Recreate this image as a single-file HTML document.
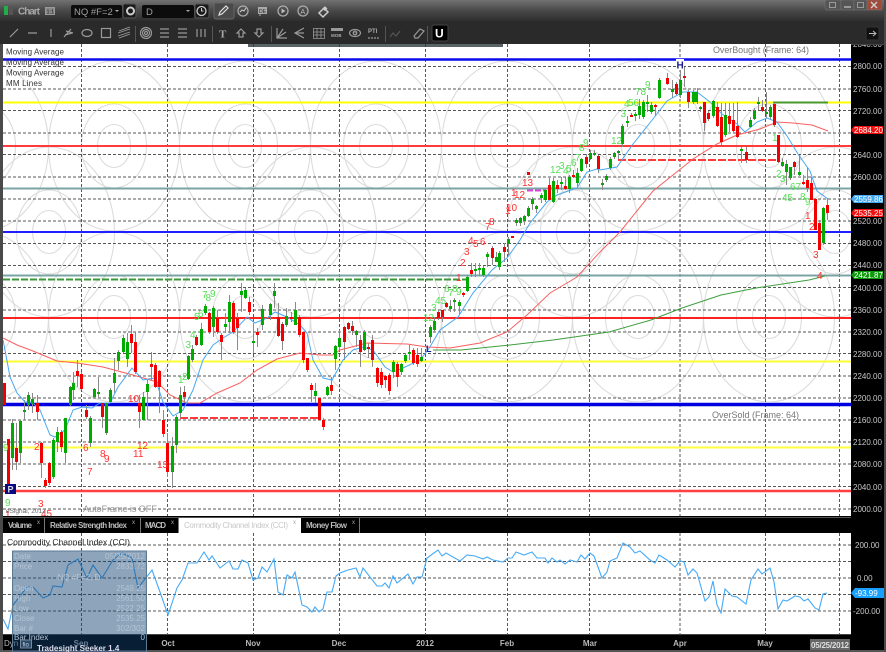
<!DOCTYPE html>
<html><head><meta charset="utf-8"><style>
html,body{margin:0;padding:0;background:#333;width:886px;height:652px;overflow:hidden}
svg{display:block;filter:blur(.3px)}
text{font-family:"Liberation Sans",sans-serif}
</style></head><body>
<svg width="886" height="652" viewBox="0 0 886 652" xmlns="http://www.w3.org/2000/svg">
<defs>
<linearGradient id="tb" x1="0" y1="0" x2="0" y2="1"><stop offset="0" stop-color="#727272"/><stop offset=".45" stop-color="#4c4c4c"/><stop offset="1" stop-color="#2e2e2e"/></linearGradient>
<clipPath id="cc"><rect x="3" y="47" width="848" height="355"/></clipPath>
<clipPath id="cp"><rect x="3" y="44" width="848" height="472"/></clipPath>
<clipPath id="ax"><rect x="851" y="45" width="33" height="600"/></clipPath>
</defs>
<rect width="886" height="652" fill="#4a4a4a"/>
<rect width="886" height="21" fill="url(#tb)"/>
<rect y="21" width="886" height="23" fill="#2a2a2a"/>
<!-- title row -->
<rect x="4" y="6" width="4" height="9" fill="#1fae4a"/><rect x="9" y="6" width="4" height="9" fill="#555"/>
<text x="18" y="14.500" font-size="10" font-weight="bold" fill="#a8a8a8" textLength="22">Chart</text>
<rect x="45.500" y="7.500" width="9" height="7" fill="#888" stroke="#999"/><text x="46.500" y="13.500" font-size="5.500" fill="#222">1:1</text>
<rect x="71" y="5" width="51" height="13" rx="2" fill="#0c0c0c"/>
<text x="74" y="15" font-size="9.500" fill="#a0a0a0">NQ #F=2</text>
<path d="M115 10h4l-2 2z" fill="#aaa"/>
<rect x="123" y="4" width="13" height="14" rx="2" fill="#1a1a1a" stroke="#555"/>
<circle cx="130.500" cy="11" r="3.500" fill="none" stroke="#ccc" stroke-width="2"/>
<rect x="142" y="5" width="52" height="13" rx="2" fill="#0c0c0c"/>
<text x="146" y="15" font-size="9.500" fill="#a0a0a0">D</text>
<path d="M186 10h4l-2 2z" fill="#aaa"/>
<rect x="195" y="4" width="14" height="14" rx="2" fill="#1a1a1a" stroke="#555"/>
<circle cx="201.500" cy="11" r="4.500" fill="none" stroke="#ccc" stroke-width="1.300"/><path d="M201.500 8v3h2" fill="none" stroke="#ccc"/>
<rect x="214" y="3" width="20" height="16" rx="2" fill="#4a4a4a" stroke="#666"/>
<path d="M219 15l1-3 6-6 2 2-6 6z" fill="none" stroke="#ddd" stroke-width="1.200"/>
<circle cx="243" cy="11" r="5" fill="none" stroke="#aaa" stroke-width="1.300"/><path d="M240 12l2-2 2 1 2-3" fill="none" stroke="#ccc"/>
<rect x="258" y="7" width="9" height="7" fill="#aaa"/><path d="M260 14v2" stroke="#aaa"/><text x="259" y="13" font-size="5" fill="#222">DE</text>
<circle cx="283" cy="11" r="5" fill="none" stroke="#aaa" stroke-width="1.300"/><path d="M281.500 8.500l4 2.500-4 2.500z" fill="#bbb"/>
<circle cx="303" cy="11" r="5" fill="none" stroke="#aaa" stroke-width="1.300"/><text x="300.500" y="14" font-size="7" fill="#bbb">A</text>
<path d="M319 13l5-5 4 4-5 5z" fill="none" stroke="#ccc" stroke-width="1.500"/><rect x="323" y="7" width="3.500" height="3.500" fill="#ccc" transform="rotate(45 325 9)"/>
<!-- window buttons -->
<rect x="825" y="0" width="16" height="10" rx="2" fill="#555" stroke="#777" stroke-width=".5"/><rect x="829.500" y="2.500" width="6" height="5" fill="none" stroke="#999"/>
<rect x="841" y="0" width="13" height="10" fill="#555" stroke="#777" stroke-width=".5"/><rect x="844" y="6" width="7" height="2" fill="#999"/>
<rect x="854" y="0" width="13" height="10" fill="#555" stroke="#777" stroke-width=".5"/><rect x="857.500" y="2.500" width="6" height="5" fill="none" stroke="#999"/>
<rect x="867" y="0" width="15" height="10" rx="1" fill="#a24a3a" stroke="#777" stroke-width=".5"/><path d="M871 2l6 6M877 2l-6 6" stroke="#ccc" stroke-width="1.500"/>
<!-- toolbar -->
<g fill="none" stroke="#999" stroke-width="1.200">
<path d="M10 37l8-8M28 33h9M51 29v8"/>
<path d="M64 37l7-8M66 31l7 2M65 35l7-2"/>
<ellipse cx="87" cy="33" rx="5" ry="3.500"/>
<rect x="101.500" y="28.500" width="9" height="9"/>
<path d="M118 36l12-4M118 33l12-4M119 38l11-4M119 31l11-4" stroke-width=".9"/>
<circle cx="146" cy="33" r="5.500"/><circle cx="146" cy="33" r="3.500"/><circle cx="146" cy="33" r="1.500"/>
<path d="M160 29h9M160 33h9M160 37h9M178 29h9M178 33h9M178 37h9"/>
<path d="M197 29v8M201 29v8M205 29v8"/>
<path d="M241 29l4 4h-2v4h-4v-4h-2zM259 37l4-4h-2v-4h-4v4h-2z"/>
<path d="M277 28v10h10M277 38l9-6M277 38l6-9"/>
<path d="M304 28l-9 5 9 5M295 33h9"/>
<path d="M313.500 28.500h11v10h-11zM317 28v10M321 28v10M313 32h11M313 35h11" stroke-width=".8"/>
<rect x="331" y="28" width="12" height="3" fill="#999" stroke="none"/>
<ellipse cx="355" cy="33" rx="5.500" ry="3.500"/>
<circle cx="355" cy="33" r="1.800"/>
<path d="M368 38h11" stroke-dasharray="2 1"/>
<path d="M390 37l3-4 3 3 4-5" stroke="#555"/>
<path d="M414 36l6-7 4 2-6 7h-3z"/>
</g>
<g stroke="#555"><path d="M135.500 26v16M212.500 26v16M271.500 26v16M385.500 26v16M427.500 26v16"/></g>
<text x="219" y="37.500" font-size="11" font-weight="bold" fill="#aaa" style="font-family:'Liberation Serif',serif">T</text>
<text x="331" y="37" font-size="4.500" font-weight="bold" fill="#aaa">MOB</text>
<text x="353" y="35" font-size="4.500" fill="#aaa">O</text>
<text x="368" y="33" font-size="6" font-weight="bold" fill="#aaa">PTI</text>
<rect x="432" y="25" width="16" height="16" rx="2" fill="#000" stroke="#444"/>
<text x="435" y="37.500" font-size="12" font-weight="bold" fill="#fff">U</text>
<rect x="866" y="27" width="13" height="13" rx="1" fill="#111" stroke="#333"/>
<path d="M869 33.500h6M873 31l3 2.500-3 2.500" fill="none" stroke="#bbb"/>
<!-- chart -->
<rect x="3" y="44" width="848" height="472" fill="#fff"/>
<rect x="0" y="44" width="3" height="473" fill="#4a4a4a"/>
<rect x="248" y="44" width="255" height="3" fill="#5a6466"/>
<rect x="851" y="44" width="33" height="608" fill="#000"/>
<g clip-path="url(#cc)" fill="none" stroke="#dcdcdc" stroke-width="1.100">
<ellipse cx="-17" cy="146" rx="16.500" ry="21.500"/><ellipse cx="-17" cy="146" rx="32.500" ry="42"/><ellipse cx="-17" cy="146" rx="65.500" ry="85"/>
<ellipse cx="114" cy="146" rx="16.500" ry="21.500"/><ellipse cx="114" cy="146" rx="32.500" ry="42"/><ellipse cx="114" cy="146" rx="65.500" ry="85"/>
<ellipse cx="245" cy="146" rx="16.500" ry="21.500"/><ellipse cx="245" cy="146" rx="32.500" ry="42"/><ellipse cx="245" cy="146" rx="65.500" ry="85"/>
<ellipse cx="376" cy="146" rx="16.500" ry="21.500"/><ellipse cx="376" cy="146" rx="32.500" ry="42"/><ellipse cx="376" cy="146" rx="65.500" ry="85"/>
<ellipse cx="507" cy="146" rx="16.500" ry="21.500"/><ellipse cx="507" cy="146" rx="32.500" ry="42"/><ellipse cx="507" cy="146" rx="65.500" ry="85"/>
<ellipse cx="638" cy="146" rx="16.500" ry="21.500"/><ellipse cx="638" cy="146" rx="32.500" ry="42"/><ellipse cx="638" cy="146" rx="65.500" ry="85"/>
<ellipse cx="769" cy="146" rx="16.500" ry="21.500"/><ellipse cx="769" cy="146" rx="32.500" ry="42"/><ellipse cx="769" cy="146" rx="65.500" ry="85"/>
<ellipse cx="49" cy="232" rx="16.500" ry="21.500"/><ellipse cx="49" cy="232" rx="32.500" ry="42"/><ellipse cx="49" cy="232" rx="65.500" ry="85"/>
<ellipse cx="311" cy="232" rx="16.500" ry="21.500"/><ellipse cx="311" cy="232" rx="32.500" ry="42"/><ellipse cx="311" cy="232" rx="65.500" ry="85"/>
<ellipse cx="573" cy="232" rx="16.500" ry="21.500"/><ellipse cx="573" cy="232" rx="32.500" ry="42"/><ellipse cx="573" cy="232" rx="65.500" ry="85"/>
<ellipse cx="835" cy="232" rx="16.500" ry="21.500"/><ellipse cx="835" cy="232" rx="32.500" ry="42"/><ellipse cx="835" cy="232" rx="65.500" ry="85"/>
<ellipse cx="-17" cy="317" rx="16.500" ry="21.500"/><ellipse cx="-17" cy="317" rx="32.500" ry="42"/><ellipse cx="-17" cy="317" rx="65.500" ry="85"/>
<ellipse cx="114" cy="317" rx="16.500" ry="21.500"/><ellipse cx="114" cy="317" rx="32.500" ry="42"/><ellipse cx="114" cy="317" rx="65.500" ry="85"/>
<ellipse cx="245" cy="317" rx="16.500" ry="21.500"/><ellipse cx="245" cy="317" rx="32.500" ry="42"/><ellipse cx="245" cy="317" rx="65.500" ry="85"/>
<ellipse cx="376" cy="317" rx="16.500" ry="21.500"/><ellipse cx="376" cy="317" rx="32.500" ry="42"/><ellipse cx="376" cy="317" rx="65.500" ry="85"/>
<ellipse cx="507" cy="317" rx="16.500" ry="21.500"/><ellipse cx="507" cy="317" rx="32.500" ry="42"/><ellipse cx="507" cy="317" rx="65.500" ry="85"/>
<ellipse cx="638" cy="317" rx="16.500" ry="21.500"/><ellipse cx="638" cy="317" rx="32.500" ry="42"/><ellipse cx="638" cy="317" rx="65.500" ry="85"/>
<ellipse cx="769" cy="317" rx="16.500" ry="21.500"/><ellipse cx="769" cy="317" rx="32.500" ry="42"/><ellipse cx="769" cy="317" rx="65.500" ry="85"/>
</g>
<!-- grid -->
<g fill="none" stroke="#3a3a3a" stroke-width="1" stroke-dasharray="3 2" opacity=".85">
<path d="M3 66.500H851M3 89H851M3 110.500H851M3 133H851M3 154.500H851M3 177H851M3 199H851M3 221H851M3 243.500H851M3 265.500H851M3 287.500H851M3 310H851M3 332H851M3 353.500H851M3 376H851M3 398H851M3 420H851M3 442H851M3 464H851M3 486.500H851M3 509H851"/>
<path d="M81.500 44V516M167.500 44V516M253.500 44V516M339.500 44V516M425.500 44V516M507.500 44V516M589.500 44V516M680 44V516M765.500 44V516M839.500 44V516"/>
</g>
<!-- horizontal levels -->
<g fill="none">
<path d="M3 59.500H851" stroke="#0a0aee" stroke-width="2.600"/>
<path d="M3 102.500H851" stroke="#ffff00" stroke-width="2"/>
<path d="M3 146H851" stroke="#ff3a3a" stroke-width="2"/>
<path d="M3 188.500H851" stroke="#7aa3a3" stroke-width="2"/>
<path d="M3 232H851" stroke="#2020ff" stroke-width="2"/>
<path d="M3 275.500H851" stroke="#7aa3a3" stroke-width="2"/>
<path d="M3 279.500H467" stroke="#3a9a3a" stroke-width="2" stroke-dasharray="7 2"/>
<path d="M3 318H851" stroke="#ff2020" stroke-width="2"/>
<path d="M3 361.500H851" stroke="#ffff30" stroke-width="2"/>
<path d="M3 404.500H851" stroke="#0000e0" stroke-width="3.400"/>
<path d="M3 447.500H851" stroke="#ffff40" stroke-width="2"/>
<path d="M3 491H851" stroke="#ff4040" stroke-width="2.400"/>
<path d="M180 418H318" stroke="#ff3a3a" stroke-width="2" stroke-dasharray="8 2"/>
<path d="M618 160H778" stroke="#ff3a3a" stroke-width="2" stroke-dasharray="8 2"/>
<path d="M527 190.500H545" stroke="#e040e0" stroke-width="2" stroke-dasharray="6 2"/>
<path d="M773 102.500H828" stroke="#4a9a2a" stroke-width="2"/>
</g>
<!-- wicks -->
<path fill="none" stroke="#8a8a8a" stroke-width="1" d="M8.500 439V490M12.500 419V470M16.500 423V470M20.500 420V463M24.500 400V420M28.500 392V410M32.500 393V413M37.500 395V420M41.500 442V478M45.500 478V488M49.500 462V485M53.500 438V479M57.500 427V452M61.500 430V452M65.500 418V463M70.500 386V406M73.500 372V400M77.500 360V387M81.500 372V390M86.500 405V419M90.500 416V447M94.500 388V398M98.500 377V398M102.500 403V428M106.500 403V435M110.500 388V403M114.500 358V393M118.500 350V370M123.500 335V353M127.500 333V367M131.500 325V353M135.500 332V374M139.500 395V428M143.500 392V420M147.500 380V420M151.500 352V380M155.500 363V388M159.500 370V413M163.500 410V437M167.500 433V477M172.500 437V488M176.500 415V453M180.500 387V418M184.500 386V403M188.500 355V380M192.500 345V362M196.500 335V346M201.500 323V346M205.500 304V315M209.500 312V334M213.500 306V337M217.500 310V334M221.500 333V360M225.500 313V333M229.500 295V333M233.500 301V334M237.500 313V350M241.500 283V312M245.500 288V299M249.500 297V315M253.500 323V353M257.500 328V347M262.500 305V330M270.500 303V320M274.500 283V308M278.500 303V337M282.500 322V350M286.500 308V327M291.500 312V322M295.500 302V325M299.500 315V337M303.500 332V363M307.500 358V372M311.500 383V402M315.500 383V403M319.500 398V420M323.500 418V430M327.500 386V396M331.500 377V395M335.500 345V370M339.500 330V350M344.500 326V360M348.500 322V330M352.500 321V335M356.500 330V347M360.500 335V367M364.500 330V351M368.500 343V358M372.500 335V367M377.500 367V387M381.500 368V388M385.500 375V388M389.500 373V395M393.500 360V378M397.500 362V387M401.500 363V375M405.500 353V363M409.500 345V360M413.500 348V365M417.500 348V367M421.500 348V362M430.500 325V343M434.500 317V332M438.500 310V320M442.500 310V322M446.500 302V308M450.500 300V312M454.500 298V312M459.500 300V315M463.500 292V297M467.500 275V292M471.500 263V277M475.500 263V277M479.500 263V275M483.500 266V277M487.500 252V267M492.500 246V265M496.500 252V262M499.500 251V270M504.500 243V262M508.500 237V255M516.500 218V226M520.500 217V226M524.500 215V225M528.500 206V217M532.500 197V210M536.500 205V213M541.500 193V203M545.500 188V202M549.500 178V200M553.500 178V203M557.500 180V193M561.500 177V190M565.500 177V190M569.500 175V193M573.500 170V178M577.500 168V187M581.500 158V172M586.500 154V168M590.500 150V160M594.500 150V156M598.500 155V173M602.500 179V190M606.500 174V182M610.500 157V170M614.500 152V159M618.500 150V159M622.500 124V147M627.500 116V127M631.500 113V117M635.500 112V121M639.500 99V119M643.500 100V119M647.500 95V112M651.500 102V114M655.500 104V116M659.500 78V99M667.500 73V85M672.500 80V98M676.500 82V95M680.500 70V98M684.500 67V87M688.500 90V108M693.500 90V104M697.500 88V104M700.500 106V112M704.500 102V131M708.500 111V121M713.500 100V118M717.500 102V127M721.500 103V145M725.500 103V137M729.500 103V132M733.500 103V132M737.500 102V138M741.500 147V163M746.500 147V163M750.500 117V128M754.500 108V120M758.500 97V110M762.500 100V112M766.500 92V118M770.500 105V120M774.500 103V127M778.500 135V163M782.500 158V167M786.500 160V185M790.500 167V180M794.500 161V175M799.500 155V176M803.500 175V185M807.500 168V192M811.500 177V200M815.500 198V230M819.500 220V250M823.500 207V245M827.500 198V220"/>
<!-- MAs -->
<g clip-path="url(#cp)" fill="none" stroke-width="1">
<polyline stroke="#3f9f3f" points="433,350 461,350 510,345 553,340 609,332 651,320 682,308 721,295 756,288 809,280 825,276"/>
<polyline stroke="#f86060" points="3,338 17,345 33,351 57,361 77,363 103,367 133,375 157,382 170,395 187,403 200,403 217,393 240,383 257,370 277,359 300,353 320,355 333,355 340,350 367,343 407,344 427,347 450,348 480,343 507,332 527,315 550,293 567,283 577,277 600,252 620,232 653,191 693,159 717,144 737,135 760,129 777,122 793,123 812,125 828,131"/>
<polyline stroke="#48a8f0" points="3,340 5,350 10,377 17,393 25,402 32,402 40,410 50,435 55,437 65,430 73,410 82,407 92,408 100,403 110,403 118,387 132,368 143,380 155,378 163,402 173,416 183,410 193,390 203,360 213,345 223,338 233,332 247,317 255,323 267,318 275,312 287,317 300,325 307,333 313,360 323,378 332,380 343,360 353,350 363,347 373,350 385,367 393,372 403,368 420,360 428,350 440,330 458,317 473,293 492,270 507,258 520,240 530,223 547,202 557,195 577,188 587,172 597,169 600,170 617,167 633,144 653,119 667,101 683,92 697,92 710,102 722,114 737,124 745,132 757,122 767,118 777,122 787,136 798,154 810,171 817,191 828,199"/>
</g>
<!-- bodies -->
<path fill="none" stroke="#00aa00" stroke-width="3" d="M12.500 423V458M20.500 421V453M24.500 410V412M28.500 395V405M32.500 399V404M53.500 440V477M57.500 432V442M65.500 418V453M70.500 387V405M73.500 383V390M90.500 418V443M94.500 389V397M98.500 392V394M106.500 403V433M110.500 390V402M114.500 373V383M118.500 352V361M123.500 338V352M127.500 342V359M143.500 397V420M147.500 384V392M172.500 446V472M176.500 417V445M180.500 395V413M188.500 356V379M192.500 349V360M201.500 329V345M205.500 306V313M213.500 308V327M225.500 324V327M229.500 302V322M241.500 291V295M245.500 290V298M253.500 341V343M262.500 309V325M270.500 304V315M274.500 291V296M286.500 316V325M295.500 310V325M315.500 391V396M327.500 387V395M335.500 346V359M339.500 338V347M356.500 331V335M364.500 332V350M393.500 362V372M401.500 364V372M405.500 355V361M409.500 352V354M421.500 357V361M430.500 327V337M434.500 321V330M450.500 306V309M454.500 300V302M459.500 302V306M467.500 277V291M475.500 269V271M479.500 268V270M483.500 268V275M487.500 254V257M496.500 257V262M499.500 253V267M508.500 239V244M516.500 220V223M520.500 218V223M524.500 216V221M528.500 208V216M532.500 199V204M536.500 206V209M541.500 195V198M545.500 190V200M553.500 181V202M561.500 182V184M569.500 177V189M577.500 173V183M581.500 159V171M590.500 153V159M594.500 153V155M602.500 183V185M606.500 176V180M610.500 159V168M614.500 153V157M618.500 151V153M622.500 126V144M627.500 121V123M635.500 114V116M639.500 106V115M643.500 102V117M647.500 102V104M651.500 105V112M659.500 80V98M672.500 89V92M680.500 80V95M693.500 92V102M696.500 92V102M700.500 107V109M713.500 101V116M725.500 115V135M741.500 149V151M750.500 120V127M754.500 111V119M758.500 102V104M766.500 112V114M770.500 107V117M782.500 162V166M786.500 164V172M790.500 167V178M799.500 172V175M823.500 208V243"/>
<path fill="none" stroke="#f00000" stroke-width="3" d="M4.500 383V405M8.500 439V487M16.500 448V462M37.500 403V412M41.500 443V463M45.500 480V486M49.500 463V483M61.500 432V447M77.500 371V376M81.500 374V389M86.500 410V417M102.500 403V417M131.500 334V343M135.500 342V372M139.500 403V412M151.500 364V367M155.500 365V387M159.500 371V387M163.500 420V434M167.500 443V472M184.500 392V397M196.500 337V345M209.500 313V332M217.500 318V332M221.500 335V342M233.500 303V332M237.500 318V328M249.500 302V312M257.500 332V335M278.500 317V336M282.500 324V341M291.500 317V319M299.500 317V335M303.500 332V360M307.500 358V370M311.500 385V390M319.500 398V420M323.500 420V427M331.500 385V391M344.500 327V342M348.500 323V329M352.500 326V331M360.500 340V352M368.500 347V349M372.500 340V360M377.500 368V383M381.500 372V385M385.500 376V380M389.500 375V391M397.500 364V377M413.500 350V363M417.500 355V364M438.500 312V318M442.500 310V317M446.500 303V307M463.500 293V295M471.500 270V274M492.500 248V258M504.500 247V252M512.500 236V238M528.500 172V175M549.500 185V200M557.500 185V189M565.500 186V189M573.500 175V177M586.500 157V164M598.500 156V169M631.500 115V117M655.500 105V107M667.500 78V84M676.500 84V94M684.500 76V78M688.500 92V102M704.500 102V123M708.500 113V119M717.500 107V126M721.500 117V142M729.500 116V124M733.500 120V131M737.500 126V137M746.500 152V160M762.500 107V111M774.500 104V125M778.500 135V162M794.500 162V167M803.500 182V184M807.500 180V188M811.500 183V200M815.500 199V230M819.500 223V250M827.500 205V213"/>
<!-- count numbers -->
<g font-size="10" fill="#55e055">
<text x="3" y="451">9</text><text x="5" y="506">9</text>
<text x="178" y="383">1</text><text x="182" y="380">2</text><text x="185.500" y="348">3</text><text x="190" y="338">4</text><text x="194" y="320">5</text><text x="198" y="317">6</text><text x="202" y="298">7</text><text x="205.500" y="301">8</text><text x="210" y="297">9</text>
<text x="423" y="321">12</text><text x="431" y="311">3</text><text x="435" y="304">45</text><text x="444" y="292">6</text><text x="448" y="296">7</text><text x="452" y="292">8</text><text x="456" y="295">9</text>
<text x="550" y="173">12</text><text x="559" y="169">3</text><text x="563" y="174">4</text><text x="566" y="172">5</text><text x="571" y="166">6</text><text x="575" y="161">7</text><text x="579" y="151">8</text><text x="583" y="146">9</text>
<text x="611" y="144">12</text><text x="620.500" y="117">3</text><text x="624" y="107">4</text><text x="628" y="106">56</text><text x="635" y="95">78</text><text x="645" y="88">9</text>
<text x="772" y="141">1</text><text x="776" y="177">2</text><text x="780" y="182">3</text><text x="790" y="190">67</text><text x="782" y="201">45</text><text x="800" y="200">8</text><text x="805" y="205">9</text>
</g>
<g font-size="10" fill="#ff3030">
<text x="34" y="450">2</text><text x="83" y="451">6</text><text x="87" y="475">7</text><text x="100" y="457">8</text><text x="104" y="462">9</text><text x="128" y="402">10</text><text x="137" y="449">12</text><text x="133" y="457">11</text><text x="157" y="468">13</text><text x="38" y="507">3</text><text x="41" y="517">45</text><text x="5" y="518">1</text>
<text x="456" y="281">1</text><text x="460" y="266">2</text><text x="464" y="255">3</text><text x="468" y="244">4</text><text x="473" y="247">5</text><text x="480" y="245">6</text><text x="485" y="230">7</text><text x="489" y="225">8</text><text x="506" y="211">10</text><text x="505" y="214">1</text><text x="511" y="196">1</text><text x="514" y="198">12</text><text x="522" y="186">13</text>
<text x="805" y="219">1</text><text x="809" y="230">2</text><text x="813" y="258">3</text><text x="817" y="279">4</text>
</g>
<!-- markers -->
<rect x="676" y="59" width="8" height="11" fill="#fff"/>
<text x="676.500" y="68.500" font-size="10" font-weight="bold" fill="#1a1a90">H</text>
<text x="426" y="352" font-size="9" font-weight="bold" fill="#1a1a90">L</text>
<rect x="5" y="484" width="11" height="10" fill="#0a0a80"/><text x="7.500" y="492.500" font-size="9" font-weight="bold" fill="#ddd">P</text>
<!-- labels -->
<g font-size="8" fill="#333">
<text x="6" y="54.500" textLength="58">Moving Average</text>
<text x="6" y="65" textLength="58">Moving Average</text>
<text x="6" y="75.500" textLength="58">Moving Average</text>
<text x="6" y="86" textLength="36">MM Lines</text>
</g>
<text x="713" y="53" font-size="9" fill="#777" textLength="96">OverBought (Frame: 64)</text>
<text x="712" y="418" font-size="9" fill="#777" textLength="87">OverSold (Frame: 64)</text>
<text x="83" y="512" font-size="9.500" fill="#999" textLength="74">AutoFrame is OFF</text>
<text x="6" y="513" font-size="6.500" fill="#666">eSignal, 2012</text>
<!-- axis labels -->
<g font-size="8" fill="#c8c8c8" clip-path="url(#ax)">
<text x="853" y="47">2840.00</text>
<text x="853" y="69">2800.00</text><text x="853" y="92">2760.00</text><text x="853" y="114">2720.00</text><text x="853" y="158">2640.00</text><text x="853" y="180">2600.00</text><text x="853" y="224">2520.00</text><text x="853" y="246">2480.00</text><text x="853" y="268">2440.00</text><text x="853" y="291">2400.00</text><text x="853" y="313">2360.00</text><text x="853" y="335">2320.00</text><text x="853" y="357">2280.00</text><text x="853" y="379">2240.00</text><text x="853" y="401">2200.00</text><text x="853" y="423">2160.00</text><text x="853" y="445">2120.00</text><text x="853" y="467">2080.00</text><text x="853" y="490">2040.00</text><text x="853" y="512">2000.00</text>
<text x="855" y="548">200.00</text><text x="857" y="581">0.00</text><text x="853" y="614">-200.00</text>
</g>
<path d="M851 130l3-4h29v8h-29z" fill="#f01010"/><text x="854" y="133" font-size="8" fill="#fff">2684.20</text>
<path d="M851 199l3-4h29v8h-29z" fill="#45aaf5"/><text x="854" y="202" font-size="8" fill="#fff">2559.86</text>
<path d="M851 213l3-4h29v8h-29z" fill="#f01010"/><text x="854" y="216" font-size="8" fill="#fff">2535.25</text>
<path d="M851 275l3-4h29v8h-29z" fill="#0a9a0a"/><text x="854" y="278" font-size="8" fill="#fff">2421.87</text>
<!-- tabs -->
<rect x="0" y="516" width="851" height="17" fill="#000"/>
<rect x="0" y="516" width="3" height="136" fill="#4a4a4a"/>
<path d="M3 517.500H851" stroke="#555"/>
<path d="M44.500 518V533M140.500 518V533M178.500 518V533M359.500 518V533" stroke="#777"/>
<rect x="179" y="518" width="122" height="15" fill="#fff"/>
<g font-size="8" fill="#bbb" font-weight="bold">
<text x="8" y="528" textLength="24">Volume</text>
<text x="50" y="528" textLength="77">Relative Strength Index</text>
<text x="145" y="528" textLength="21">MACD</text>
<text x="306" y="528" textLength="41">Money Flow</text>
</g>
<text x="184" y="528" font-size="8" fill="#c8c8c8" textLength="104">Commodity Channel Index (CCI)</text>
<g font-size="6" fill="#aaa"><text x="37" y="524">x</text><text x="132" y="524">x</text><text x="171" y="524">x</text><text x="293" y="524">x</text><text x="352" y="524">x</text></g>
<!-- CCI panel -->
<rect x="3" y="533" width="848" height="102" fill="#fff"/>
<g fill="none" stroke="#3a3a3a" stroke-dasharray="3 2" opacity=".85">
<path d="M3 545H851M3 561.500H851M3 578H851M3 594.500H851M3 611H851"/>
<path d="M81.500 533V635M167.500 533V635M253.500 533V635M339.500 533V635M425.500 533V635M507.500 533V635M589.500 533V635M680 533V635M765.500 533V635M839.500 533V635"/>
</g>
<polyline fill="none" stroke="#45aaf8" stroke-width="1.100" points="3,619 8,629 13,605 27,587 33,587 43,598 50,595 53,586 62,587 68,565 78,559 87,578 93,565 102,578 113,560 122,553 132,558 138,588 152,570 160,592 168,615 177,588 182,580 188,563 197,563 204,552 209,560 212,556 220,568 229,561 233,569 238,569 242,560 248,563 253,580 258,578 262,567 267,572 274,559 278,592 283,595 287,575 292,578 295,572 302,605 307,607 312,612 315,607 319,612 323,609 327,592 332,592 336,576 340,573 348,570 356,568 360,577 363,568 377,586 382,586 385,583 389,588 393,576 397,583 408,574 413,584 417,577 422,577 427,558 438,550 442,556 446,553 460,561 467,555 475,556 483,559 487,557 493,560 503,562 508,558 512,558 516,552 524,555 532,552 537,558 545,558 548,563 552,558 557,562 560,560 565,564 570,560 577,562 581,555 585,559 590,553 594,556 602,578 607,572 610,561 617,558 623,543 630,547 635,553 640,551 650,560 655,563 659,555 667,560 675,567 680,561 684,562 688,575 693,569 697,573 705,601 709,597 713,581 717,605 721,613 725,589 732,596 737,597 746,604 751,580 758,569 762,574 770,568 774,582 778,609 783,600 787,601 795,596 800,597 804,601 808,599 815,608 819,610 823,594 827,593"/>
<text x="7" y="545" font-size="8.500" fill="#222" textLength="123">Commodity Channel Index (CCI)</text>
<path d="M851 593l4-5h29v10h-29z" fill="#18a0ff"/><text x="855" y="596" font-size="8" fill="#fff">-93.99</text>
<!-- bottom axis -->
<rect x="3" y="635" width="848" height="15" fill="#000"/>
<rect x="0" y="650" width="886" height="2" fill="#555"/>
<rect x="884" y="0" width="2" height="652" fill="#4a4a4a"/>
<path d="M0 634.500H851M851 44.500H884" stroke="#444"/>
<g font-size="8" font-weight="bold" fill="#b8b8b8" text-anchor="middle">
<text x="81" y="646">Sep</text><text x="168" y="646">Oct</text><text x="253" y="646">Nov</text><text x="339" y="646">Dec</text><text x="425" y="646">2012</text><text x="507" y="646">Feb</text><text x="590" y="646">Mar</text><text x="680" y="646">Apr</text><text x="765" y="646">May</text>
</g>
<rect x="810" y="639" width="40" height="11" fill="#666"/>
<text x="811" y="648" font-size="8" font-weight="bold" fill="#ddd" textLength="38">05/25/2012</text>
<text x="4" y="646" font-size="8" fill="#bbb">Dyn</text>
<!-- info overlay -->
<rect x="12.500" y="551" width="134" height="101" fill="#113f6e" fill-opacity=".475" stroke="#5a7a94"/>
<g font-size="8" fill="#b4c5d6">
<text x="14" y="559">Date</text><text x="145" y="559" text-anchor="end">05/25/2012</text>
<text x="14" y="569">Price</text><text x="145" y="569" text-anchor="end">2833.72</text>
<text x="79" y="580" text-anchor="middle">NQ #F=2, D</text>
<text x="14" y="591">Open</text><text x="145" y="591" text-anchor="end">2549.25</text>
<text x="14" y="601">High</text><text x="145" y="601" text-anchor="end">2561.50</text>
<text x="14" y="611">Low</text><text x="145" y="611" text-anchor="end">2522.25</text>
<text x="14" y="621">Close</text><text x="145" y="621" text-anchor="end">2535.25</text>
<text x="14" y="631">Bar #</text><text x="145" y="631" text-anchor="end">302/302</text>
<text x="14" y="640">Bar Index</text><text x="145" y="640" text-anchor="end">0</text>
</g>
<rect x="20.500" y="640" width="11" height="8" fill="#2a4a6a" stroke="#789"/><text x="22.500" y="646.500" font-size="6" fill="#ccd">fio</text>
<text x="37" y="651" font-size="8" font-weight="bold" fill="#dde">Tradesight Seeker 1.4</text>
</svg>
</body></html>
